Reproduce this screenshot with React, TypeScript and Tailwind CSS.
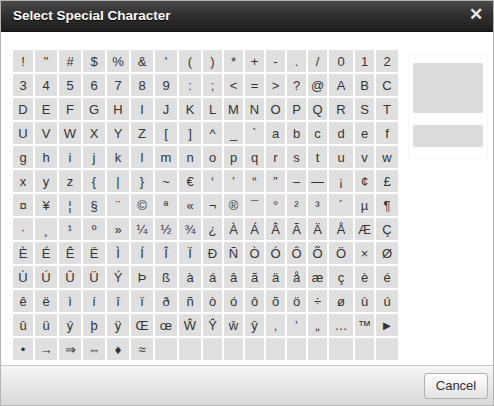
import React from "react";

const chars: string[] = [
  "!", "\"", "#", "$", "%", "&", "'", "(", ")", "*", "+", "-", ".", "/",
  "0", "1", "2", "3", "4", "5", "6", "7", "8", "9", ":", ";", "<", "=", ">", "?", "@",
  "A", "B", "C", "D", "E", "F", "G", "H", "I", "J", "K", "L", "M", "N", "O", "P", "Q", "R", "S", "T", "U", "V", "W", "X", "Y", "Z",
  "[", "]", "^", "_", "`",
  "a", "b", "c", "d", "e", "f", "g", "h", "i", "j", "k", "l", "m", "n", "o", "p", "q", "r", "s", "t", "u", "v", "w", "x", "y", "z",
  "{", "|", "}", "~", "€", "‘", "’", "“", "”", "–", "—", "¡", "¢", "£", "¤", "¥", "¦", "§", "¨", "©", "ª", "«", "¬", "®", "¯", "°", "²", "³", "´", "µ", "¶", "·", "¸", "¹", "º", "»", "¼", "½", "¾", "¿",
  "À", "Á", "Â", "Ã", "Ä", "Å", "Æ", "Ç", "È", "É", "Ê", "Ë", "Ì", "Í", "Î", "Ï", "Ð", "Ñ", "Ò", "Ó", "Ô", "Õ", "Ö", "×", "Ø", "Ù", "Ú", "Û", "Ü", "Ý", "Þ", "ß",
  "à", "á", "â", "ã", "ä", "å", "æ", "ç", "è", "é", "ê", "ë", "ì", "í", "î", "ï", "ð", "ñ", "ò", "ó", "ô", "õ", "ö", "÷", "ø", "ù", "ú", "û", "ü", "ý", "þ", "ÿ",
  "Œ", "œ", "Ŵ", "Ŷ", "ŵ", "ŷ", "‚", "‛", "„", "…", "™", "►", "•", "→", "⇒", "⇔", "♦", "≈",
];

const total = 13 * 17;
const cells: string[] = [...chars];
while (cells.length < total) cells.push("");

export default function App() {
  return (
    <div
      className="w-[494px] h-[406px] flex flex-col bg-white border border-[#b4b4b4] overflow-hidden"
      style={{ fontFamily: "'Liberation Sans', Arial, sans-serif" }}
    >
      <div className="h-[31px] shrink-0 flex items-center justify-between pl-[12px] pr-[10px] bg-gradient-to-b from-[#4b4b4b] via-[#2e2e2e] to-[#1e1e1e] border-b border-[#111]">
        <span className="text-white font-bold text-[13.5px] [text-shadow:0_1px_0_#000]">
          Select Special Character
        </span>
        <span className="text-[#e8e8e8] font-bold text-[17px] leading-none mt-[-4px]">✕</span>
      </div>
      <div className="flex-1 flex pl-[12px] pt-[18px]">
        <div className="grid grid-cols-[20px_22px_22px_22px_22px_22px_22px_22px_19px_19px_19px_19px_19px_19px_24px_19px_22px] auto-rows-[22px] gap-[2px] h-fit">
          {cells.map((c, i) => (
            <div
              key={i}
              className="bg-[#dfdfdf] flex items-center justify-center text-[13px] text-[#333] leading-none"
            >
              {c}
            </div>
          ))}
        </div>
        <div className="ml-[10px] mt-[4px] p-[3px] border border-[#f7f7f7] h-fit">
          <div className="flex flex-col gap-[12px] p-[1px] pt-[5px] pb-[8px]">
            <div className="w-[70px] h-[50px] bg-[#dcdcdc]" />
            <div className="w-[70px] h-[22px] bg-[#dcdcdc]" />
          </div>
        </div>
      </div>
      <div className="h-[40px] shrink-0 flex items-center justify-end pr-[5px] border-t border-[#c8c8c8] bg-gradient-to-b from-[#f6f6f6] to-[#d8d8d8]">
        <button className="w-[64px] h-[26px] rounded-[3px] border border-[#b0b0b0] bg-gradient-to-b from-[#ffffff] to-[#e2e2e2] text-[13px] text-[#333]">
          Cancel
        </button>
      </div>
    </div>
  );
}
